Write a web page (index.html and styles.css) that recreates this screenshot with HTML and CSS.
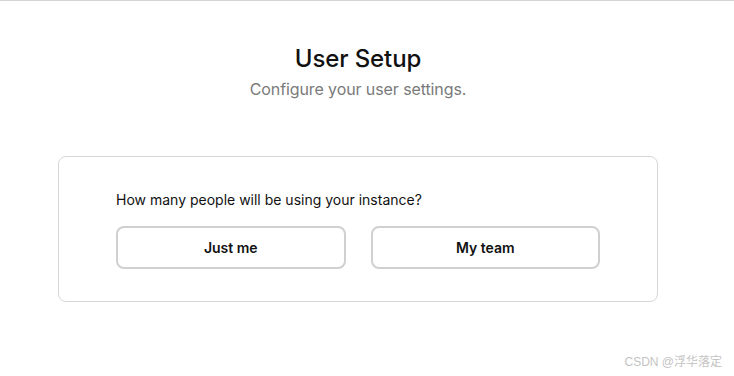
FILE: index.html
```html
<!DOCTYPE html>
<html lang="en">
<head>
    <meta charset="UTF-8">
    <meta name="viewport" content="width=device-width, initial-scale=1.0">
    <title>User Setup</title>
    <link rel="stylesheet" href="styles.css">
</head>
<body>
    <div class="page">
        <div class="setup-header">
            <h1 class="setup-title">User Setup</h1>
            <p class="setup-subtitle">Configure your user settings.</p>
        </div>
        <div class="setup-card">
            <p class="setup-question">How many people will be using your instance?</p>
            <div class="setup-options">
                <button class="option-button">Just me</button>
                <button class="option-button">My team</button>
            </div>
        </div>
    </div>
    <div class="watermark">CSDN @浮华落定</div>
</body>
</html>
```

FILE: styles.css
```css
/* 全局样式 */
* {
    box-sizing: border-box;
    margin: 0;
    padding: 0;
}

html, body {
    height: 100%;
    overflow: hidden;
}

body {
    font-family: 'Inter', 'Noto Sans CJK SC', sans-serif;
    background: #fff;
    color: #111;
    border-top: 1px solid #d4d4d4;
}

.page {
    display: flex;
    flex-direction: column;
    align-items: center;
    padding-top: 42px;
    padding-right: 18px;
}

/* 标题 */
.setup-header {
    text-align: center;
}

.setup-title {
    font-size: 24px;
    font-weight: 500;
    line-height: 32px;
    color: #111;
    letter-spacing: -0.1px;
}

.setup-subtitle {
    font-size: 16px;
    line-height: 22px;
    margin-top: 3px;
    color: #7a7a7a;
    letter-spacing: -0.1px;
}

/* 卡片 */
.setup-card {
    width: 600px;
    margin-top: 56px;
    padding: 33px 57px 32px;
    border: 1px solid #d6d6d6;
    border-radius: 8px;
}

.setup-question {
    font-size: 14px;
    line-height: 20px;
    color: #111;
}

.setup-options {
    display: flex;
    gap: 25px;
    margin-top: 16px;
}

.option-button {
    flex: 1;
    height: 43px;
    font-family: inherit;
    font-size: 14px;
    font-weight: 600;
    color: #111;
    background: #fff;
    border: 2px solid #d0d0d0;
    border-radius: 8px;
    cursor: pointer;
}

/* 水印 */
.watermark {
    position: absolute;
    right: 12px;
    bottom: 7px;
    font-size: 12px;
    color: #c4c4c4;
    font-family: 'Liberation Sans', 'Noto Sans CJK SC', sans-serif;
}
```
